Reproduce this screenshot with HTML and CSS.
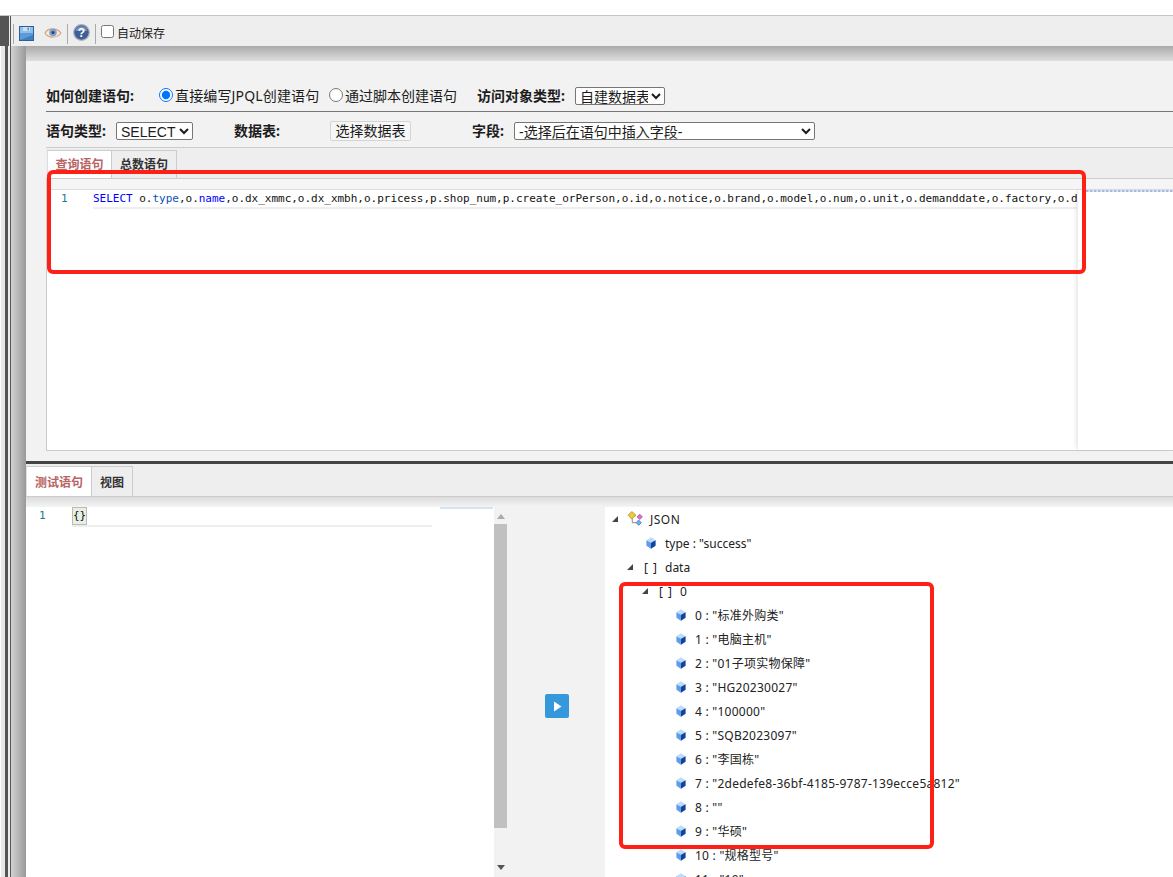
FILE: index.html
```html
<!DOCTYPE html>
<html lang="zh">
<head>
<meta charset="utf-8">
<title>JPQL</title>
<link rel="stylesheet" href="styles.css">
</head>
<body>
<svg class="sprite" width="0" height="0"><symbol id="gem" viewBox="0 0 10 12"><path d="M5 0.300 L9.600 3.200 L5 5.800 L0.400 3.200 Z" fill="#bcdcfb"/><path d="M0.400 3.200 L5 5.800 L5 11.700 L0.400 8.800 Z" fill="#5f9cea"/><path d="M9.600 3.200 L5 5.800 L5 11.700 L9.600 8.800 Z" fill="#13439f"/></symbol></svg>
<div class="topgap"></div>
<div class="app">
  <div class="rail">
    <div class="rail-head"></div>
    <div class="rail-body"></div>
  </div>
  <div class="main">
    <div class="toolbar">
      <span class="sep sep-a"></span>
      <svg class="ico-save" width="16" height="16" viewBox="0 0 16 16"><rect x="0.500" y="0.500" width="14" height="14" fill="#5b9bd8" stroke="#2f5f96"/><rect x="1" y="1" width="13" height="6" fill="#8fc0ea"/><rect x="4" y="1" width="7" height="4" fill="#c9e0f4"/><rect x="8.500" y="1.500" width="1.500" height="3" fill="#5b8fc0"/><path d="M1 14 L14 14 L14 9 Z" fill="#3f7fc0"/></svg>
      <svg class="ico-eye" width="18" height="14" viewBox="0 0 18 14"><path d="M1 7 C4 1.500 13 1.500 17 7 C13 12.500 4 12.500 1 7 Z" fill="#f6ead8" stroke="#d8a47e" stroke-width="1.200"/><circle cx="9" cy="6.500" r="3.800" fill="#7d9fcf"/><circle cx="9" cy="6.500" r="1.500" fill="#2a3f70"/></svg>
      <span class="sep sep-b"></span>
      <svg class="ico-help" width="17" height="17" viewBox="0 0 17 17"><circle cx="8.500" cy="8.500" r="7.800" fill="#3f5f92" stroke="#a8b2c2" stroke-width="1.200"/><path d="M2.500 7 A6.200 6.200 0 0 1 14.500 7 Z" fill="#7890b8"/><text x="8.500" y="13" class="help-q">?</text></svg>
      <span class="sep sep-c"></span>
      <label class="autosave"><input type="checkbox" class="check"><span>自动保存</span></label>
    </div>
    <div class="workspace">
      <div class="panel">
        <section class="upper">
          <div class="row row-first">
            <b class="lbl lbl-how">如何创建语句:</b>
            <label class="radio radio-a"><input type="radio" name="mode" checked>直接编写JPQL创建语句</label>
            <label class="radio radio-b"><input type="radio" name="mode">通过脚本创建语句</label>
            <b class="lbl lbl-access">访问对象类型:</b>
            <select class="sel sel-access"><option>自建数据表</option></select>
          </div>
          <div class="row row-second">
            <b class="lbl lbl-type">语句类型:</b>
            <select class="sel sel-type"><option>SELECT</option></select>
            <b class="lbl lbl-table">数据表:</b>
            <button class="btn" type="button">选择数据表</button>
            <b class="lbl lbl-field">字段:</b>
            <select class="sel sel-field"><option>-选择后在语句中插入字段-</option></select>
          </div>
          <div class="tabs tabs-upper">
            <span class="tab active tab-w">查询语句</span>
            <span class="tab tab-w">总数语句</span>
          </div>
          <div class="sql-editor">
            <div class="sql-strip"></div>
            <div class="sql-body">
              <div class="sql-main">
                <div class="gutter">1</div>
                <div class="sql-line"><span class="kw">SELECT</span> o.<span class="fn">type</span>,o.<span class="kw">name</span>,o.dx_xmmc,o.dx_xmbh,o.pricess,p.shop_num,p.create_orPerson,o.id,o.notice,o.brand,o.model,o.num,o.unit,o.demanddate,o.factory,o.dx_xmmc,o.dx_xmbh</div>
              </div>
              <div class="minimap"><div class="minimap-dots"></div></div>
            </div>
          </div>
        </section>
        <section class="lower">
          <div class="tabs tabs-lower">
            <span class="tab active tab-wide">测试语句</span>
            <span class="tab tab-n">视图</span>
          </div>
          <div class="shade"></div>
          <div class="split">
            <div class="test-editor">
              <div class="test-mark"></div>
              <div class="test-row">
                <div class="test-gutter">1</div>
                <div class="test-line"><span class="brace">{}</span></div>
              </div>
            </div>
            <div class="scroll">
              <span class="arrow-up"></span>
              <span class="thumb"></span>
              <span class="arrow-down"></span>
            </div>
            <div class="run-col">
              <span class="run"><svg width="9" height="11" viewBox="0 0 9 11"><path d="M1 0.500 L8.500 5.500 L1 10.500 Z" fill="#fff"/></svg></span>
            </div>
            <div class="tree">
              <div class="node lv0"><span class="tri"></span><svg class="ico-root" width="18" height="17" viewBox="0 0 16 16"><path d="M0.500 4 L4 0.500 L8 4 L4 7.500 Z" fill="#f0c838" stroke="#a88a20" stroke-width="0.700"/><path d="M9 5.500 L11.500 3 L14 5.500 L11.500 8 Z" fill="#e070d8" stroke="#a040a0" stroke-width="0.700"/><path d="M8 11 L10.500 8.500 L13 11 L10.500 13.500 Z" fill="#70b0f0" stroke="#3070b0" stroke-width="0.700"/><path d="M4.500 7.500 L4.500 11 L8 11" fill="none" stroke="#777" stroke-width="0.800"/></svg><span class="name">JSON</span></div>
              <div class="node lv1 leaf"><svg class="gem" width="10" height="12"><use href="#gem"/></svg><span class="name">type : "success"</span></div>
              <div class="node lv1b"><span class="tri"></span><span class="br">[ ]</span><span class="name">data</span></div>
              <div class="node lv2"><span class="tri"></span><span class="br">[ ]</span><span class="name">0</span></div>
              <div class="node lv3 leaf"><svg class="gem" width="10" height="12"><use href="#gem"/></svg><span class="name">0 : "标准外购类"</span></div>
              <div class="node lv3 leaf"><svg class="gem" width="10" height="12"><use href="#gem"/></svg><span class="name">1 : "电脑主机"</span></div>
              <div class="node lv3 leaf"><svg class="gem" width="10" height="12"><use href="#gem"/></svg><span class="name">2 : "01子项实物保障"</span></div>
              <div class="node lv3 leaf"><svg class="gem" width="10" height="12"><use href="#gem"/></svg><span class="name">3 : "HG20230027"</span></div>
              <div class="node lv3 leaf"><svg class="gem" width="10" height="12"><use href="#gem"/></svg><span class="name">4 : "100000"</span></div>
              <div class="node lv3 leaf"><svg class="gem" width="10" height="12"><use href="#gem"/></svg><span class="name">5 : "SQB2023097"</span></div>
              <div class="node lv3 leaf"><svg class="gem" width="10" height="12"><use href="#gem"/></svg><span class="name">6 : "李国栋"</span></div>
              <div class="node lv3 leaf"><svg class="gem" width="10" height="12"><use href="#gem"/></svg><span class="name">7 : "2dedefe8-36bf-4185-9787-139ecce5a812"</span></div>
              <div class="node lv3 leaf"><svg class="gem" width="10" height="12"><use href="#gem"/></svg><span class="name">8 : ""</span></div>
              <div class="node lv3 leaf"><svg class="gem" width="10" height="12"><use href="#gem"/></svg><span class="name">9 : "华硕"</span></div>
              <div class="node lv3 leaf"><svg class="gem" width="10" height="12"><use href="#gem"/></svg><span class="name">10 : "规格型号"</span></div>
              <div class="node lv3 leaf"><svg class="gem" width="10" height="12"><use href="#gem"/></svg><span class="name">11 : "10"</span></div>
            </div>
          </div>
        </section>
      </div>
    </div>
  </div>
</div>
<div class="mark mark-sql"></div>
<div class="mark mark-json"></div>
</body>
</html>
```
FILE: styles.css
```css
* { box-sizing: border-box; }
html, body { margin: 0; padding: 0; }
body {
  position: relative;
  width: 1173px;
  height: 877px;
  overflow: hidden;
  background: #fff;
  color: #1c1c1c;
  font-family: "Noto Sans", "Noto Sans CJK SC", sans-serif;
  font-size: 12px;
  display: flex;
  flex-direction: column;
}
.sprite { position: absolute; }
.topgap { height: 16px; flex: none; background: #fff; border-bottom: 1px solid #c4c4c4; }
.app { flex: 1; display: flex; min-height: 0; }

/* left rail */
.rail { width: 11px; flex: none; display: flex; flex-direction: column; }
.rail-head { height: 30px; flex: none; background: #555; border-right: 1px solid #555; box-shadow: inset -1px 0 0 #eee; }
.rail-body {
  flex: 1;
  background: linear-gradient(90deg, #fff 0 1px, #e8e8e8 1px 5px, #555 5px 8px, #eee 8px 10px, #555 10px 11px);
}

/* toolbar */
.main { flex: 1; min-width: 0; display: flex; flex-direction: column; }
.toolbar { height: 30px; flex: none; background: #eee; display: flex; align-items: center; padding-top: 6px; }
.sep { width: 1px; height: 20px; background: #aaa; flex: none; }
.sep-a { margin-left: 2px; }
.ico-save { margin-left: 5px; flex: none; }
.ico-eye { margin-left: 9px; flex: none; margin-bottom: 3px; }
.sep-b { margin-left: 5px; }
.ico-help { margin-left: 5px; flex: none; margin-bottom: 3px; }
.sep-c { margin-left: 5px; }
.help-q { font-family: "Liberation Sans", sans-serif; font-size: 12px; font-weight: 700; fill: #fff; text-anchor: middle; }
.autosave { display: flex; align-items: center; margin: 0 0 2px 5px; font-size: 12px; }
.check { margin: 0 3px 3px 0; width: 13px; height: 13px; }

/* workspace */
.workspace {
  flex: 1;
  min-height: 0;
  padding: 15px 0 0 15px;
  background:
    linear-gradient(180deg, #aaa, #dedede) 15px 0 / 100% 15px no-repeat,
    linear-gradient(90deg, #d2d2d2, #999) 0 0 / 15px 100% no-repeat;
}
.panel { height: 100%; background: #f2f2f2; display: flex; flex-direction: column; }
.upper { height: 400px; flex: none; padding: 26px 0 0 20px; display: flex; flex-direction: column; }

/* form rows */
.row { display: flex; align-items: center; flex: none; }
.row-first { height: 25px; align-items: flex-start; border-bottom: 1px solid #777; }
.row-second { height: 36px; padding-top: 9px; padding-bottom: 6px; border-bottom: 1px solid #ccc; }
.lbl { font-size: 14px; font-weight: 700; white-space: nowrap; line-height: 18px; flex: none; }
.radio { display: flex; align-items: center; font-size: 14px; line-height: 18px; white-space: nowrap; flex: none; }
.radio input { margin: 0 2px 2px 0; width: 14px; height: 14px; }
.lbl-how { width: 113px; }
.radio-a { width: 170px; letter-spacing: .15px; }
.radio-b { width: 148px; }
.lbl-access { width: 98px; }
.sel {
  font-family: "Liberation Sans", "Noto Sans CJK SC", sans-serif;
  font-size: 14px;
  height: 18px;
  padding: 0;
  background: #fff;
  border: 1px solid #767676;
  border-radius: 2px;
  color: #1c1c1c;
  flex: none;
}
.sel-access { width: 90px; }
.lbl-type { width: 77px; }
.sel-type { width: 77px; margin-left: -7px; }
.lbl-table { width: 96px; margin-left: 41px; }
.btn {
  width: 81px;
  height: 20px;
  padding: 0;
  font-family: inherit;
  font-size: 14px;
  line-height: 16px;
  background: #f6f6f6;
  border: 1px solid #d4d4d4;
  border-radius: 2px;
  color: #1c1c1c;
  flex: none;
}
.lbl-field { width: 42px; margin-left: 61px; }
.sel-field { width: 301px; }

/* tabs */
.tabs { display: flex; flex: none; background: #eee; border-bottom: 1px solid #ccc; }
.tabs-upper { height: 31px; padding: 2px 0 0 1px; }
.tabs-lower { height: 33px; padding-top: 2px; }
.tab {
  font-size: 12px;
  font-weight: 700;
  line-height: 27px;
  text-align: center;
  background: #eee;
  border: 1px solid #ccc;
  border-left: 0;
  border-bottom: 0;
  color: #333;
}
.tabs-lower .tab { line-height: 31px; }
.tab.active { background: #fff; color: #b96464; border-left: 1px solid #ddd; }
.tab-w { width: 65px; }
.tab-wide { width: 66px; }
.tab-n { width: 41px; }

/* SQL editor */
.sql-editor {
  flex: 1;
  min-height: 0;
  background: #fff;
  border-left: 1px solid #ccc;
  border-bottom: 1px solid #ccc;
  margin-bottom: 10px;
  display: flex;
  flex-direction: column;
}
.sql-strip { height: 11px; flex: none; background: #f5f5f5; border-bottom: 1px solid #ddd; }
.sql-body { flex: 1; display: flex; min-height: 0; }
.sql-main { flex: none; width: 1030px; display: flex; align-items: flex-start; overflow: hidden; }
.gutter {
  width: 46px;
  flex: none;
  padding-left: 14px;
  font: 11px/18px "DejaVu Sans Mono", monospace;
  color: #237893;
}
.sql-line {
  flex: 1;
  min-width: 0;
  height: 19px;
  overflow: hidden;
  white-space: nowrap;
  border-bottom: 2px solid #eee;
  font: 11px/18px "DejaVu Sans Mono", monospace;
  letter-spacing: -0.015px;
  color: #111;
}
.kw { color: #00f; }
.fn { color: #0a50b8; }
.minimap { flex: 1; border-left: 1px solid #eee; box-shadow: -3px 0 4px -2px rgba(0, 0, 0, .1); padding-left: 8px; }
.minimap-dots {
  height: 2px;
  background: repeating-linear-gradient(90deg, #a4b8ec 0 2px, #ccd6f2 2px 3px, #e8ecf8 3px 4px);
}

/* lower section */
.lower { flex: 1; min-height: 0; border-top: 3px solid #444; display: flex; flex-direction: column; overflow: hidden; }
.shade { height: 10px; flex: none; background: linear-gradient(180deg, #dcdcdc, #f4f4f4); }
.split { flex: 1; min-height: 0; display: flex; }
.test-editor { width: 468px; flex: none; background: #fff; position: relative; }
.test-mark { height: 2px; margin: 0 1px 0 414px; background: #d4e4f6; position: absolute; top: 0; left: 0; right: 0; }
.test-row { display: flex; align-items: flex-start; }
.test-gutter {
  width: 46px;
  flex: none;
  padding-left: 13px;
  font: 11px/18px "DejaVu Sans Mono", monospace;
  color: #237893;
}
.test-line { width: 360px; height: 20px; border-bottom: 2px solid #eee; flex: none; }
.brace {
  display: block;
  width: 15px;
  height: 18px;
  background: #e8f0e4;
  border: 1px solid #bbb;
  font: 11px/16px "DejaVu Sans Mono", monospace;
  color: #111;
  text-align: center;
}
.scroll { width: 13px; flex: none; background: #f2f2f2; display: flex; flex-direction: column; align-items: center; }
.arrow-up { width: 0; height: 0; margin-top: 7px; border: 4px solid transparent; border-top: 0; border-bottom: 5px solid #aaa; flex: none; }
.thumb { width: 13px; height: 304px; margin-top: 5px; background: #c0c0c0; flex: none; }
.arrow-down { width: 0; height: 0; margin-top: 37px; border: 4px solid transparent; border-bottom: 0; border-top: 5px solid #555; flex: none; }
.run-col { width: 98px; flex: none; background: #f2f2f2; display: flex; justify-content: center; padding: 187px 0 0 2px; }
.run { width: 24px; height: 24px; background: #3498db; border-radius: 2px; display: flex; align-items: center; justify-content: center; }
.tree { flex: 1; min-width: 0; background: #fff; font-size: 12px; }
.node { height: 24px; display: flex; align-items: center; white-space: nowrap; color: #222; }
.tri { width: 0; height: 0; border-bottom: 6px solid #444; border-left: 6px solid transparent; flex: none; }
.gem { flex: none; }
.br { flex: none; font-size: 12px; letter-spacing: 1px; }
.lv0 { padding-left: 7px; }
.lv0 .ico-root { margin-left: 9px; flex: none; }
.lv0 .name { margin-left: 5px; letter-spacing: .5px; }
.lv1 { padding-left: 41px; }
.lv1 .name { margin-left: 9px; }
.lv1b { padding-left: 22px; }
.lv1b .br { margin-left: 11px; width: 21px; }
.lv2 { padding-left: 37px; }
.lv2 .br { margin-left: 11px; width: 21px; }
.lv3 { padding-left: 71px; }
.lv3 .name { margin-left: 9px; letter-spacing: .25px; }

/* red annotations drawn on top of the screenshot */
.mark { position: absolute; border: 4px solid #ff2015; border-radius: 6px; pointer-events: none; }
.mark-sql { left: 47px; top: 170px; width: 1039px; height: 104px; }
.mark-json { left: 619px; top: 582px; width: 315px; height: 267px; }
```
